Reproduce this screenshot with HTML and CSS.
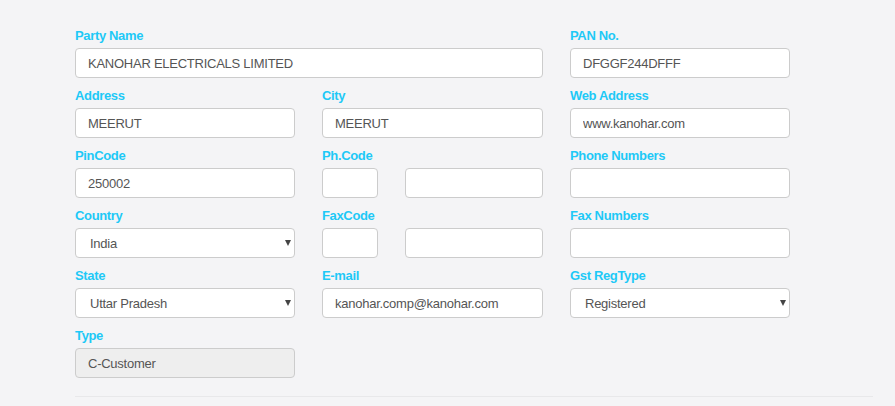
FILE: index.html
```html
<!DOCTYPE html>
<html>
<head>
<meta charset="utf-8">
<link rel="stylesheet" href="styles.css">
</head>
<body>
<div class="page">
  <form class="form">
    <div class="field span2">
      <label class="lbl">Party Name</label>
      <input class="inp" type="text" value="KANOHAR ELECTRICALS LIMITED">
    </div>
    <div class="field">
      <label class="lbl">PAN No.</label>
      <input class="inp" type="text" value="DFGGF244DFFF">
    </div>

    <div class="field">
      <label class="lbl">Address</label>
      <input class="inp" type="text" value="MEERUT">
    </div>
    <div class="field">
      <label class="lbl">City</label>
      <input class="inp" type="text" value="MEERUT">
    </div>
    <div class="field">
      <label class="lbl">Web Address</label>
      <input class="inp" type="text" value="www.kanohar.com">
    </div>

    <div class="field">
      <label class="lbl">PinCode</label>
      <input class="inp" type="text" value="250002">
    </div>
    <div class="field">
      <label class="lbl">Ph.Code</label>
      <div class="pair">
        <input class="inp" type="text" value="">
        <input class="inp" type="text" value="">
      </div>
    </div>
    <div class="field">
      <label class="lbl">Phone Numbers</label>
      <input class="inp" type="text" value="">
    </div>

    <div class="field">
      <label class="lbl">Country</label>
      <div class="sel"><select class="inp"><option>India</option></select></div>
    </div>
    <div class="field">
      <label class="lbl">FaxCode</label>
      <div class="pair">
        <input class="inp" type="text" value="">
        <input class="inp" type="text" value="">
      </div>
    </div>
    <div class="field">
      <label class="lbl">Fax Numbers</label>
      <input class="inp" type="text" value="">
    </div>

    <div class="field">
      <label class="lbl">State</label>
      <div class="sel"><select class="inp"><option>Uttar Pradesh</option></select></div>
    </div>
    <div class="field">
      <label class="lbl">E-mail</label>
      <input class="inp" type="text" value="kanohar.comp@kanohar.com">
    </div>
    <div class="field">
      <label class="lbl">Gst RegType</label>
      <div class="sel"><select class="inp"><option>Registered</option></select></div>
    </div>

    <div class="field">
      <label class="lbl">Type</label>
      <input class="inp readonly" type="text" value="C-Customer" readonly>
    </div>
  </form>
  <div class="rule"></div>
</div>
</body>
</html>
```

FILE: styles.css
```css
html, body {
  margin: 0;
  padding: 0;
  background: #f4f4f6;
}
body {
  font-family: "Liberation Sans", Arial, sans-serif;
}
.page {
  padding: 27px 0 0 75px;
  width: 798px;
}
.form {
  display: grid;
  grid-template-columns: 220px 221px 220px;
  column-gap: 27px;
  row-gap: 9px;
  width: 715px;
}
.field {
  display: flex;
  flex-direction: column;
}
.span2 {
  grid-column: span 2;
}
.lbl {
  display: block;
  font-size: 13px;
  font-weight: bold;
  line-height: 18px;
  letter-spacing: -0.35px;
  color: #1ec9f7;
  margin-bottom: 3px;
}
.inp {
  box-sizing: border-box;
  display: block;
  width: 100%;
  height: 30px;
  margin: 0;
  padding: 0 12px;
  border: 1px solid #cccccc;
  border-radius: 4px;
  background: #ffffff;
  font-family: "Liberation Sans", Arial, sans-serif;
  font-size: 13px;
  letter-spacing: -0.25px;
  color: #555555;
  outline: none;
}
.readonly {
  background: #eeeeee;
}
.pair {
  display: flex;
  gap: 27px;
}
.pair .inp:first-child {
  width: 56px;
  flex: none;
}
.pair .inp:last-child {
  flex: 1;
}
.sel {
  position: relative;
}
.sel select {
  appearance: none;
  -webkit-appearance: none;
  padding-left: 14px;
}
.sel::after {
  content: "";
  position: absolute;
  right: 4px;
  top: 12px;
  border-left: 3.5px solid transparent;
  border-right: 3.5px solid transparent;
  border-top: 6px solid #444444;
  pointer-events: none;
}
.rule {
  margin-top: 18px;
  height: 1px;
  background: #e8e8ea;
}
```
